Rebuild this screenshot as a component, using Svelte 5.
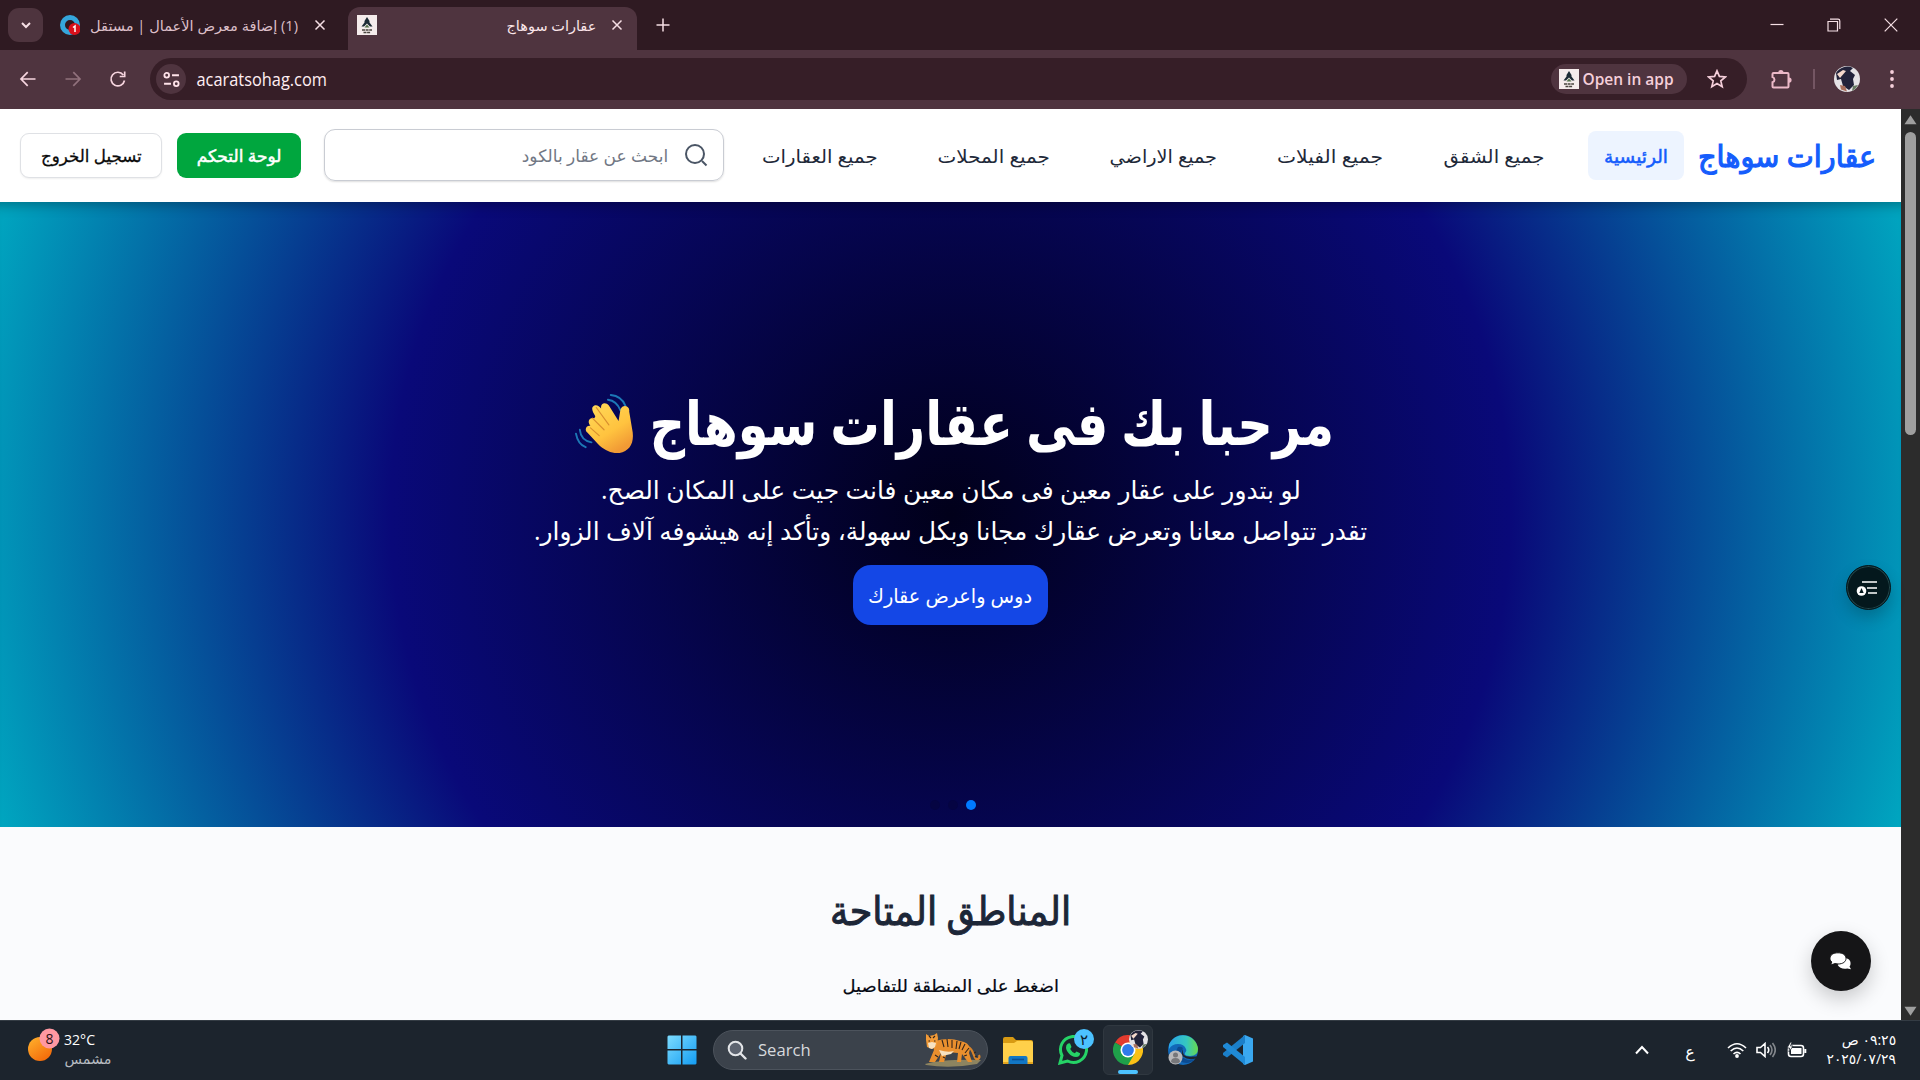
<script>
  const links = [
    { label: 'جميع الشقق', w: 101 },
    { label: 'جميع الفيلات', w: 106 },
    { label: 'جميع الاراضي', w: 107 },
    { label: 'جميع المحلات', w: 112 },
    { label: 'جميع العقارات', w: 116 }
  ];

  // Condenses or widens a label so that it fills its column exactly.
  function squeeze(node) {
    const ratio = node.parentElement.clientWidth / node.offsetWidth;
    node.style.transform = `scaleX(${ratio})`;
  }
</script>

{#snippet fit(text, w)}
  <span class="fit" style:width="{w}px"><span use:squeeze>{text}</span></span>
{/snippet}

{#snippet favicon()}
  <svg class="favicon" viewBox="0 0 20 20">
    <rect width="20" height="20" fill="#f5ecec" />
    <path d="M10 2l2.500 4v1.500l3 4h-2.500l-3-3-3 3H4.500l3-4V6z" fill="#1d2b35" />
    <path d="M7.500 12.500l2.500-3 2.500 3z" fill="#55734c" />
    <path d="M5 15h10M6.500 17.500h7" stroke="#49443e" stroke-width="1.300" stroke-dasharray="3 .6" />
  </svg>
{/snippet}

{#snippet avatar()}
  <svg class="avatar" viewBox="0 0 26 26">
    <circle cx="13" cy="13" r="13" fill="#e5e3e6" />
    <path d="M2 7A13 13 0 0 1 19 2l-3 3 5 4-2 4 1 6-5 5-6-4-2-7-4 1z" fill="#22233b" />
    <path d="M3 8l6-4 3 1-6 7z" fill="#f3d8cc" />
    <path d="M6 19l5 1 2 5.500-6-2z" fill="#a86f5c" />
    <path d="M19 20l5-1a13 13 0 0 1-6 6z" fill="#667a62" />
  </svg>
{/snippet}

<div class="screen">
  <div class="tabs">
    <div class="drop"><svg viewBox="0 0 12 12" width="12" height="12"><path d="M2 4l4 4 4-4" /></svg></div>
    <div class="tab first">
      <svg class="favicon" viewBox="0 0 20 20"><circle cx="10" cy="10" r="7.500" fill="#34161e" stroke="#35a6dc" stroke-width="5" /><circle cx="14.500" cy="14" r="6" fill="#d9101b" /><path class="one" d="M13 12.500l2-1.500v6" /></svg>
      <span dir="rtl">{@render fit('(1) إضافة معرض الأعمال | مستقل', 208)}</span>
      <svg class="x" viewBox="0 0 12 12"><path d="M1.500 1.500l9 9M10.500 1.500l-9 9" /></svg>
    </div>
    <div class="tab active">
      {@render favicon()}
      <span class="grow"></span>
      {@render fit('عقارات سوهاج', 90)}
      <svg class="x" viewBox="0 0 12 12"><path d="M1.500 1.500l9 9M10.500 1.500l-9 9" /></svg>
    </div>
    <svg class="plus" viewBox="0 0 14 14"><path d="M7 .5v13M.5 7h13" /></svg>
    <span class="grow"></span>
    <svg class="win" viewBox="0 0 14 14"><path d="M.5 6.500h13" /></svg>
    <svg class="win" viewBox="0 0 14 14"><path d="M1 3.500h9.500V13H1zM3 1.200h8q1.800 0 1.800 1.800v8" /></svg>
    <svg class="win" viewBox="0 0 14 14"><path d="M.7.7l12.600 12.600M13.300.7L.7 13.300" /></svg>
  </div>

  <div class="toolbar">
    <svg class="nav-ic" viewBox="0 0 18 18"><path d="M16.500 9H2M8.700 2.200L2 9l6.700 6.800" /></svg>
    <svg class="nav-ic dim" viewBox="0 0 18 18"><path d="M1.500 9H16M9.300 2.200L16 9l-6.700 6.800" /></svg>
    <svg class="nav-ic reload" viewBox="0 0 18 18"><path d="M15.500 10.500A6.800 6.800 0 1 1 14.300 5M15.700 1.500v5h-5" /></svg>
    <div class="url">
      <div class="site"><svg viewBox="0 0 16 16" width="17" height="17"><circle cx="3.500" cy="4" r="2.200" /><path d="M8.500 4H15M1 12h6.500" /><circle cx="12.500" cy="12" r="2.200" /></svg></div>
      {@render fit('acaratsohag.com', 130)}
      <span class="grow"></span>
      <div class="chip">{@render favicon()}{@render fit('Open in app', 91)}</div>
      <svg class="star" viewBox="0 0 20 20"><path d="M10 1.800l2.400 5.600 6 .5-4.600 4 1.400 5.900-5.200-3.200-5.200 3.200 1.400-5.900-4.600-4 6-.5z" /></svg>
    </div>
    <svg class="ext" viewBox="0 0 22 22"><path d="M3.500 5h14q1 0 1 1v12.500q0 1-1 1h-14q-1 0-1-1v-4.200a2.700 2.700 0 0 0 0-5.200V6q0-1 1-1z" /><path class="knob" d="M8.300 4.500a2.600 2.600 0 0 1 5.200 0zM19 9.500a2.600 2.600 0 0 1 0 5.200z" /></svg>
    <i class="sep"></i>
    {@render avatar()}
    <svg class="dots" viewBox="0 0 6 20"><circle cx="3" cy="3" r="1.900" /><circle cx="3" cy="10" r="1.900" /><circle cx="3" cy="17" r="1.900" /></svg>
  </div>

  <div class="body">
    <main>
      <header>
        <button class="logout">{@render fit('تسجيل الخروج', 101)}</button>
        <button class="dash">{@render fit('لوحة التحكم', 85)}</button>
        <div class="search">
          {@render fit('ابحث عن عقار بالكود', 146)}
          <svg viewBox="0 0 24 24" width="24" height="24"><circle cx="11" cy="11" r="9" /><path d="M18 18l4.500 4.500" /></svg>
        </div>
        <nav dir="rtl">
          <a class="on">{@render fit('الرئيسية', 64)}</a>
          {#each links as l}<a>{@render fit(l.label, l.w)}</a>{/each}
        </nav>
        <div class="logo">{@render fit('عقارات سوهاج', 178)}</div>
      </header>

      <section class="hero">
        <div class="title">
          <svg class="wave" viewBox="0 0 62 62">
            <defs><linearGradient id="skin" x1="0" y1="0" x2=".6" y2="1"><stop offset="0" stop-color="#ffdb5b" /><stop offset=".65" stop-color="#ffc33f" /><stop offset="1" stop-color="#f19a35" /></linearGradient></defs>
            <g fill="none" stroke="#1c78b6" stroke-width="2" stroke-linecap="round"><path d="M34 7q9 1 13 11M37 2q11 1 15 11M5 38q1 11 12 13M1 42q2 11 10 14" /></g>
            <path fill="url(#skin)" d="M21 24c-3-5-5-9-1-11 3-1 5 1 7 3-1-6 5-7 8-3l10 16 2-12c2-6 10-4 9 2l3 18c3 14-2 23-13 25-8 1-16-3-22-9L13 41c-4-3-1-8 3-7-4-5-1-9 4-8z" />
            <path d="M22 15l13 18M18 26l12 12M16 36l9 8" fill="none" stroke="#d98f2f" stroke-width="1.200" stroke-linecap="round" />
          </svg>
          <h1>{@render fit('مرحبا بك فى عقارات سوهاج', 685)}</h1>
        </div>
        <p dir="rtl">{@render fit('لو بتدور على عقار معين فى مكان معين فانت جيت على المكان الصح.', 700)}</p>
        <p dir="rtl">{@render fit('تقدر تتواصل معانا وتعرض عقارك مجانا وبكل سهولة، وتأكد إنه هيشوفه آلاف الزوار.', 833)}</p>
        <button class="cta">{@render fit('دوس واعرض عقارك', 164)}</button>
        <div class="pager"><i></i><i></i><i class="cur"></i></div>
        <div class="list-fab">
          <svg viewBox="0 0 22 16" width="22" height="16"><path d="M6 2h15M11 8h10M12 13h9" stroke="#fff" stroke-width="1.500" /><circle cx="5.500" cy="11" r="4.800" fill="#fff" /><path d="M5.500 8l2.200 5H3.300z" fill="#04181d" /></svg>
        </div>
      </section>

      <section class="areas">
        <h2>{@render fit('المناطق المتاحة', 241)}</h2>
        <small>{@render fit('اضغط على المنطقة للتفاصيل', 216)}</small>
        <div class="chat">
          <svg viewBox="0 0 22 18" width="22" height="18"><path d="M11 6h4c4 .5 6 3 5.500 6 0 1.200-.5 2-1 2.600l1.500 2.600-3.800-.8c-4 1-8-.6-9.500-3.500z" fill="#fff" /><path d="M8 .8c5 0 8 2.300 8 5.600S13 12 8 12l-3-.4L.5 13l1.300-3C0 8.500 0 7.500 0 6.400 0 3 3 .8 8 .8z" fill="#fff" stroke="#151517" stroke-width="1" /></svg>
        </div>
      </section>
    </main>
    <div class="scroll">
      <svg viewBox="0 0 14 10" width="13" height="10"><path d="M7 0l6.500 9.500H.5z" /></svg>
      <i></i>
      <span class="grow"></span>
      <svg viewBox="0 0 14 10" width="13" height="10"><path d="M7 10L.5.5h13z" /></svg>
    </div>
  </div>

  <footer>
    <div class="weather">
      <svg viewBox="0 0 32 34" width="32" height="34"><defs><linearGradient id="sun" x1="0" y1="0" x2=".7" y2="1"><stop stop-color="#ffb42e" /><stop offset="1" stop-color="#f36a0a" /></linearGradient></defs><circle cx="12" cy="21" r="12" fill="url(#sun)" /><circle cx="21.500" cy="10.500" r="10" fill="#ff98a2" /><text x="21.500" y="15.500" text-anchor="middle">8</text></svg>
      <div>
        {@render fit('32°C', 31)}
        <span class="cond">{@render fit('مشمس', 47)}</span>
      </div>
    </div>
    <div class="apps">
      <svg class="start" viewBox="0 0 30 30"><defs><linearGradient id="w" x1="0" y1="0" x2="1" y2="1"><stop stop-color="#7ddcff" /><stop offset="1" stop-color="#139cf2" /></linearGradient></defs><path fill="url(#w)" d="M1.500.5H14V14H.5V1.500zM15.500.5h13l1 1V14h-14zM.5 15.500H14v14H1.500l-1-1zM15.500 15.500h14v13l-1 1h-13z" /></svg>
      <div class="find">
        <svg viewBox="0 0 20 20" width="20" height="20"><circle cx="8.500" cy="8.500" r="6.800" fill="#5d6470" stroke="#e3e5e8" stroke-width="2" /><path d="M13.500 13.500l5 5" stroke="#e3e5e8" stroke-width="2.400" stroke-linecap="round" /></svg>
        {@render fit('Search', 53)}
        <svg class="tiger" viewBox="0 0 58 34">
          <path d="M1 31q18-5 56-4l-4 4q-27 5-51 1z" fill="#8d8460" />
          <path d="M44 14c6 2 5 10 8 12 3 1 4-2 3-4" fill="none" stroke="#d8842b" stroke-width="2.200" />
          <path d="M11 8q14-4 25 0 9 1 10 8l-1 4 3 9h-4l-6-8-1 8h-4l1-9-11-1-3 10h-5l2-9-6 9H5l5-12-2-6z" fill="#e98f2e" />
          <path d="M2 1l3 2 5-1 3-2 1 5-1 7-5 4-5-2-1-7z" fill="#f19a37" />
          <path d="M4 10l4-1 4 1-1 4-3 2-3-1zM15 17q9 3 15 1l-3 3-9 2z" fill="#f7e2c1" />
          <path d="M5 3l2 2M11 3L9 5M4.500 8h1.500M10 8h1.500M18 7l2 7M23 6l1 8M28 7v8M33 8l-1 8M37 9l-2 7M41 11l-3 6M45 15l-4 5M11 22l3 2M40 23l3-1M19 24l2 1M50 20l2-1M51 24l2-1" fill="none" stroke="#33241a" stroke-width="1.100" />
        </svg>
      </div>
      <svg class="ic" viewBox="0 0 30 30"><path d="M0 4q0-2 2-2h8l3 3h15q2 0 2 2v5H0z" fill="#d79a13" /><path d="M0 8h11l3-2h14q2 0 2 2v20H0z" fill="#ffd04a" /><path d="M0 27h30v2H0z" fill="#e4a51e" /><path d="M5.500 29v-6q0-2 2-2h15q2 0 2 2v6z" fill="#1277c5" /><path d="M9 24.500h12" stroke="#0c4f93" stroke-width="1.600" /></svg>
      <div class="wa">
        <svg class="ic" viewBox="0 0 30 30"><path d="M2 28l2-7.500A13 13 0 1 1 9.500 26z" fill="none" stroke="#25d366" stroke-width="3" /><path d="M10 8.500l2-.2 1.500 3.800-1.300 1.800q1.500 3 4.600 4.300l1.700-1.700 3.600 1.800q0 3.700-4.100 3.700C12.500 22 8 16 8 12.500q0-3 2-4z" fill="#25d366" /></svg>
        <b>٢</b>
      </div>
      <div class="tile">
        <svg class="ic" viewBox="0 0 30 30"><path d="M15 15L2 7.500A15 15 0 0 1 28 7.500z" fill="#e33b2e" /><path d="M15 15V7.500h13A15 15 0 0 1 15 30z" fill="#fbc116" /><path d="M2 7.500A15 15 0 0 0 15 30l6.500-11.300L15 15z" fill="#1fa04a" /><circle cx="15" cy="15" r="7.500" fill="#fff" /><circle cx="15" cy="15" r="5.900" fill="#2f7bea" /></svg>
        <span class="mini">{@render avatar()}</span>
        <i></i>
      </div>
      <svg class="ic" viewBox="0 0 30 30"><defs><linearGradient id="e1"><stop stop-color="#2aa5e8" /><stop offset=".6" stop-color="#35c7c0" /><stop offset="1" stop-color="#68d94b" /></linearGradient></defs><circle cx="15" cy="15" r="15" fill="#1268b8" /><path d="M1 10A15 15 0 0 1 30 14q0 7-8 7-6 0-5-3 2-2 1-4-2-5-8-5-6 0-9 5z" fill="url(#e1)" /><path d="M10 12q-5 8 2 14 8 5 15-2-9 3-13-3-2-4 1-8-2-2-5-1z" fill="#0c4b91" /><path d="M15 14q-1 3 1 6 3 2.500 9 1.500h5l-2 2q-8 2-13-2-2.500-3 0-7.500z" fill="#1c2530" /><circle cx="7.500" cy="22.500" r="7" fill="#b9b9bb" /><circle cx="7.500" cy="20" r="2.500" fill="#77777a" /><path d="M3 27q0-4 4.500-4t4.500 4q-4 3-9 0z" fill="#77777a" /></svg>
      <svg class="ic" viewBox="0 0 30 30"><path d="M22 0l8 3.500v23L22 30l-2-1V1z" fill="#3aa8f0" /><path d="M22 0v8L4 22.500 0 20v-2z" fill="#1b7fc9" /><path d="M22 30v-8L4 7.500 0 10v2z" fill="#1f8ad6" /></svg>
    </div>
    <div class="tray">
      <svg class="chev" viewBox="0 0 14 10"><path d="M1 8.500l6-6.500 6 6.500" /></svg>
      <span class="lang">ع</span>
      <svg class="wifi" viewBox="0 0 20 16"><path d="M1 6q9-8.500 18 0M3.700 9q6.300-6 12.600 0M6.500 12q3.500-3.300 7 0" /><circle cx="10" cy="14" r="1.900" /></svg>
      <svg class="vol" viewBox="0 0 20 16"><path d="M1 5.500h3.500L9 1.500v13l-4.500-4H1zM11.500 5q2.500 3 0 6" /><path opacity=".45" d="M14 3q4 5 0 10M16.500 1q5.500 7 0 14" /></svg>
      <svg class="bat" viewBox="0 0 20 16"><rect x="1.500" y="3.500" width="15" height="11" rx="2.500" /><path d="M18.300 7v4" stroke-width="2" /><path class="solid" d="M4 6h10.500v6H4z" /><path class="bolt" d="M3.500 0L0 6h2.500L2 10l4-6H3.500L5 0z" /></svg>
      <div class="clock" dir="rtl">
        {@render fit('٠٩:٢٥ ص', 54)}
        {@render fit('٢٠٢٥/٠٧/٢٩', 69)}
      </div>
    </div>
  </footer>
</div>

<style>
  :global(body) { margin: 0; overflow: hidden; }
  * { box-sizing: border-box; }
  .screen { width: 1920px; height: 1080px; display: flex; flex-direction: column; overflow: hidden; font-family: 'Open Sans', 'DejaVu Sans', sans-serif; color: #fbe6ea; }
  svg { flex: none; display: block; }
  .grow { flex: 1; }
  .fit { display: inline-flex; justify-content: center; flex: none; white-space: nowrap; }
  .fit > span { flex: none; display: block; }
  button { font-family: inherit; padding: 0; border: 0; display: flex; align-items: center; justify-content: center; flex: none; }
  h1, h2, p { margin: 0; }

  .tabs { height: 50px; background: #2f1a22; display: flex; align-items: center; padding: 0 22px 0 8px; flex: none; font-size: 14px; }
  .drop path, .x path, .plus path { fill: none; stroke: #f6dfe5; stroke-width: 1.500; }
  .win path { fill: none; stroke: #f6dfe5; stroke-width: 1.200; }
  .one { fill: none; stroke: #fff; stroke-width: 1.500; }
  .drop { width: 35px; height: 34px; border-radius: 11px; background: #4e343e; display: grid; place-items: center; margin-right: 17px; }
  .drop path { stroke-width: 2; }
  .favicon { width: 20px; height: 20px; }
  .tab { height: 43px; display: flex; align-items: center; align-self: flex-end; padding-bottom: 7px; }
  .first { width: 288px; color: #dcbfc8; }
  .first .favicon { margin-right: 10px; }
  .x { width: 12px; height: 12px; margin-left: 16px; }
  .active { width: 289px; background: #4f343f; border-radius: 12px 12px 0 0; padding: 0 14px 7px 9px; }
  .active .x { margin-left: 15px; }
  .plus { width: 14px; height: 14px; margin-left: 19px; }
  .win { width: 14px; height: 14px; margin-left: 43px; }

  .toolbar { height: 59px; background: #4f343f; display: flex; align-items: center; padding: 0 25px 1px 19px; flex: none; }
  .nav-ic { width: 18px; height: 18px; margin-right: 27px; fill: none; stroke: #f7d5df; stroke-width: 1.700; }
  .reload { margin-right: 23px; }
  .dim { stroke: #91717c; }
  .url { width: 1597px; height: 42px; border-radius: 21px; background: #361e27; display: flex; align-items: center; padding: 0 20px 0 6px; font-size: 18px; color: #ffeef2; }
  .site { width: 30px; height: 30px; border-radius: 50%; background: #4f343f; display: grid; place-items: center; margin-right: 11px; }
  .site svg { fill: none; stroke: #ffe3ea; stroke-width: 1.700; }
  .chip { display: flex; align-items: center; width: 136px; height: 30px; border-radius: 15px; background: #4f343f; padding-left: 8px; gap: 4px; font-size: 16px; font-weight: 600; color: #f5cfda; margin-right: 20px; }
  .star { width: 20px; height: 20px; fill: none; stroke: #f5cfda; stroke-width: 1.700; }
  .ext { width: 22px; height: 22px; margin-left: 23px; fill: none; stroke: #ecb9c8; stroke-width: 2; }
  .knob { fill: #ecb9c8; stroke: none; }
  .sep { width: 2px; height: 20px; background: #745663; margin: 0 19px 0 21px; }
  .avatar { width: 26px; height: 26px; }
  .dots { width: 6px; height: 20px; margin-left: 29px; fill: #f5cfda; }

  .body { flex: 1; display: flex; min-height: 0; }
  main { width: 1901px; display: flex; flex-direction: column; }
  header { height: 93px; background: #fff; display: flex; align-items: center; padding-left: 20px; flex: none; color: #1e2939; }
  .logout { width: 142px; height: 45px; border: 1px solid #dfe1e5; border-radius: 9px; background: #fff; color: #0a0a0a; font-size: 17px; -webkit-text-stroke: .3px #0a0a0a; box-shadow: 0 1px 2px #0001; margin-right: 15px; }
  .dash { width: 124px; height: 45px; border-radius: 9px; background: #00a63e; color: #fff; font-size: 17px; -webkit-text-stroke: .5px #fff; margin-right: 23px; }
  .search { width: 400px; height: 52px; border: 1px solid #c9ccd3; border-radius: 11px; display: flex; align-items: center; justify-content: flex-end; gap: 16px; padding-right: 15px; color: #717784; font-size: 17px; box-shadow: 0 1px 2px #0002; margin-right: 23px; margin-top: -1px; }
  .search .fit { padding-top: 1px; }
  .search svg { fill: none; stroke: #4a5565; stroke-width: 2; }
  nav { display: flex; gap: 28px; width: 937px; }
  nav a { height: 49px; padding: 0 16px; display: flex; align-items: center; font-size: 18px; border-radius: 8px; flex: none; }
  nav .on { background: #edf4ff; color: #155dfc; -webkit-text-stroke: .5px #155dfc; }
  .logo { margin-left: 14px; font-size: 30px; color: #155dfc; -webkit-text-stroke: 1.200px #155dfc; }

  .hero { height: 625px; position: relative; flex: none; display: flex; flex-direction: column; align-items: center; color: #fff; padding-top: 173px; background: radial-gradient(circle 1000px at 50% 50%, #01001a 0, #090979 56%, #00a6c0 100%); box-shadow: inset 0 14px 14px -12px #0005; }
  .title { height: 96px; display: flex; align-items: center; gap: 15px; width: 760px; margin-left: 8px; }
  .wave { width: 60px; height: 60px; margin-top: -1px; }
  h1 { font-size: 60px; line-height: 94px; font-weight: 700; height: 96px; }
  p { font-size: 25px; height: 41px; line-height: 37px; }
  .cta { width: 195px; height: 60px; margin-top: 12px; border-radius: 18px; background: #1447e6; color: #fff; font-size: 20px; }
  .pager { display: flex; gap: 8px; margin-top: 175px; margin-left: 5px; }
  .pager i { width: 10px; height: 10px; border-radius: 50%; background: #050442; }
  .pager .cur { background: #007aff; }
  .list-fab { position: absolute; right: 10px; top: 363px; width: 45px; height: 45px; border-radius: 50%; background: #04181d; border: 1px solid #04181d; box-shadow: inset 0 0 0 1px #23474b, 0 8px 16px #0003; display: grid; place-items: center; }
  .list-fab svg { margin-left: -4px; }

  .areas { flex: 1; background: #fafbfd; position: relative; display: flex; flex-direction: column; align-items: center; color: #1c2637; }
  h2 { font-size: 40px; line-height: 60px; height: 60px; font-weight: 400; -webkit-text-stroke: 1px #1c2637; margin-top: 53px; }
  small { font-size: 17px; color: #030712; -webkit-text-stroke: .2px #030712; line-height: 30px; height: 30px; margin-top: 31px; }
  .chat { position: absolute; right: 30px; top: 104px; width: 60px; height: 60px; border-radius: 50%; background: #151517; box-shadow: 0 8px 20px #0003; display: grid; place-items: center; }
  .scroll { width: 19px; background: #2c2c2c; display: flex; flex-direction: column; align-items: center; padding: 6px 0 4px; }
  .scroll svg { fill: #9f9f9f; }
  .scroll i { width: 11px; height: 303px; border-radius: 6px; background: #9f9f9f; margin-top: 7px; }

  footer { height: 60px; background: #1c242d; border-top: 1px solid #343c44; display: flex; align-items: center; flex: none; padding: 0 24px 1px 28px; color: #fff; }
  .weather { width: 639px; display: flex; gap: 4px; align-items: center; font-size: 15px; }
  .weather > svg { margin-top: -10px; }
  .weather > div { display: flex; flex-direction: column; align-items: flex-start; line-height: 20px; margin-top: -2px; }
  .weather text { font-size: 14px; fill: #2a1216; }
  .cond { color: #b6bbc0; font-size: 14px; }
  .apps { display: flex; align-items: center; width: 586px; }
  .start { width: 30px; height: 30px; margin-right: 16px; }
  .find { width: 275px; height: 40px; border-radius: 20px; background: #3b424b; border: 1px solid #4c535c; display: flex; align-items: center; padding: 0 5px 0 13px; margin-right: 15px; font-size: 16px; color: #d8dadd; }
  .find > svg:first-child { margin-right: 11px; }
  .find .tiger { width: 58px; height: 34px; margin-left: auto; }
  .ic { width: 30px; height: 30px; }
  .wa { margin: 0 15px 0 25px; position: relative; }
  .wa b { position: absolute; left: 16px; top: -6px; width: 20px; height: 20px; border-radius: 50%; background: #4cc2ff; color: #10202b; font-size: 15px; font-weight: 400; line-height: 20px; text-align: center; }
  .tile { width: 50px; height: 50px; border-radius: 6px; background: #272f38; border: 1px solid #303840; display: grid; place-items: center; position: relative; margin-right: 15px; }
  .tile i { position: absolute; left: 14px; bottom: 0; width: 20px; height: 4px; border-radius: 2px; background: #4cc2ff; }
  .mini { position: absolute; right: 4px; top: 4px; }
  .mini .avatar { width: 19px; height: 19px; }
  .tile + .ic { margin-right: 25px; }
  .tray { display: flex; align-items: center; margin-left: auto; }
  .tray svg { fill: none; stroke: #fff; stroke-width: 1.600; width: 20px; height: 16px; }
  .tray .chev { width: 14px; height: 10px; margin-right: 34px; stroke-width: 2; }
  .lang { font-size: 16px; width: 14px; text-align: center; padding-top: 2px; margin-right: 30px; }
  .tray .wifi { margin-right: 9px; }
  .tray .wifi circle { fill: #fff; stroke: none; }
  .bat .solid { fill: #fff; stroke: none; }
  .bat .bolt { fill: #fff; stroke: #1c242d; stroke-width: .8; }
  .tray .vol { margin-right: 11px; }
  .clock { display: flex; flex-direction: column; align-items: flex-start; font-size: 14px; line-height: 19px; margin-left: 20px; margin-top: -2px; width: 69px; }
</style>
